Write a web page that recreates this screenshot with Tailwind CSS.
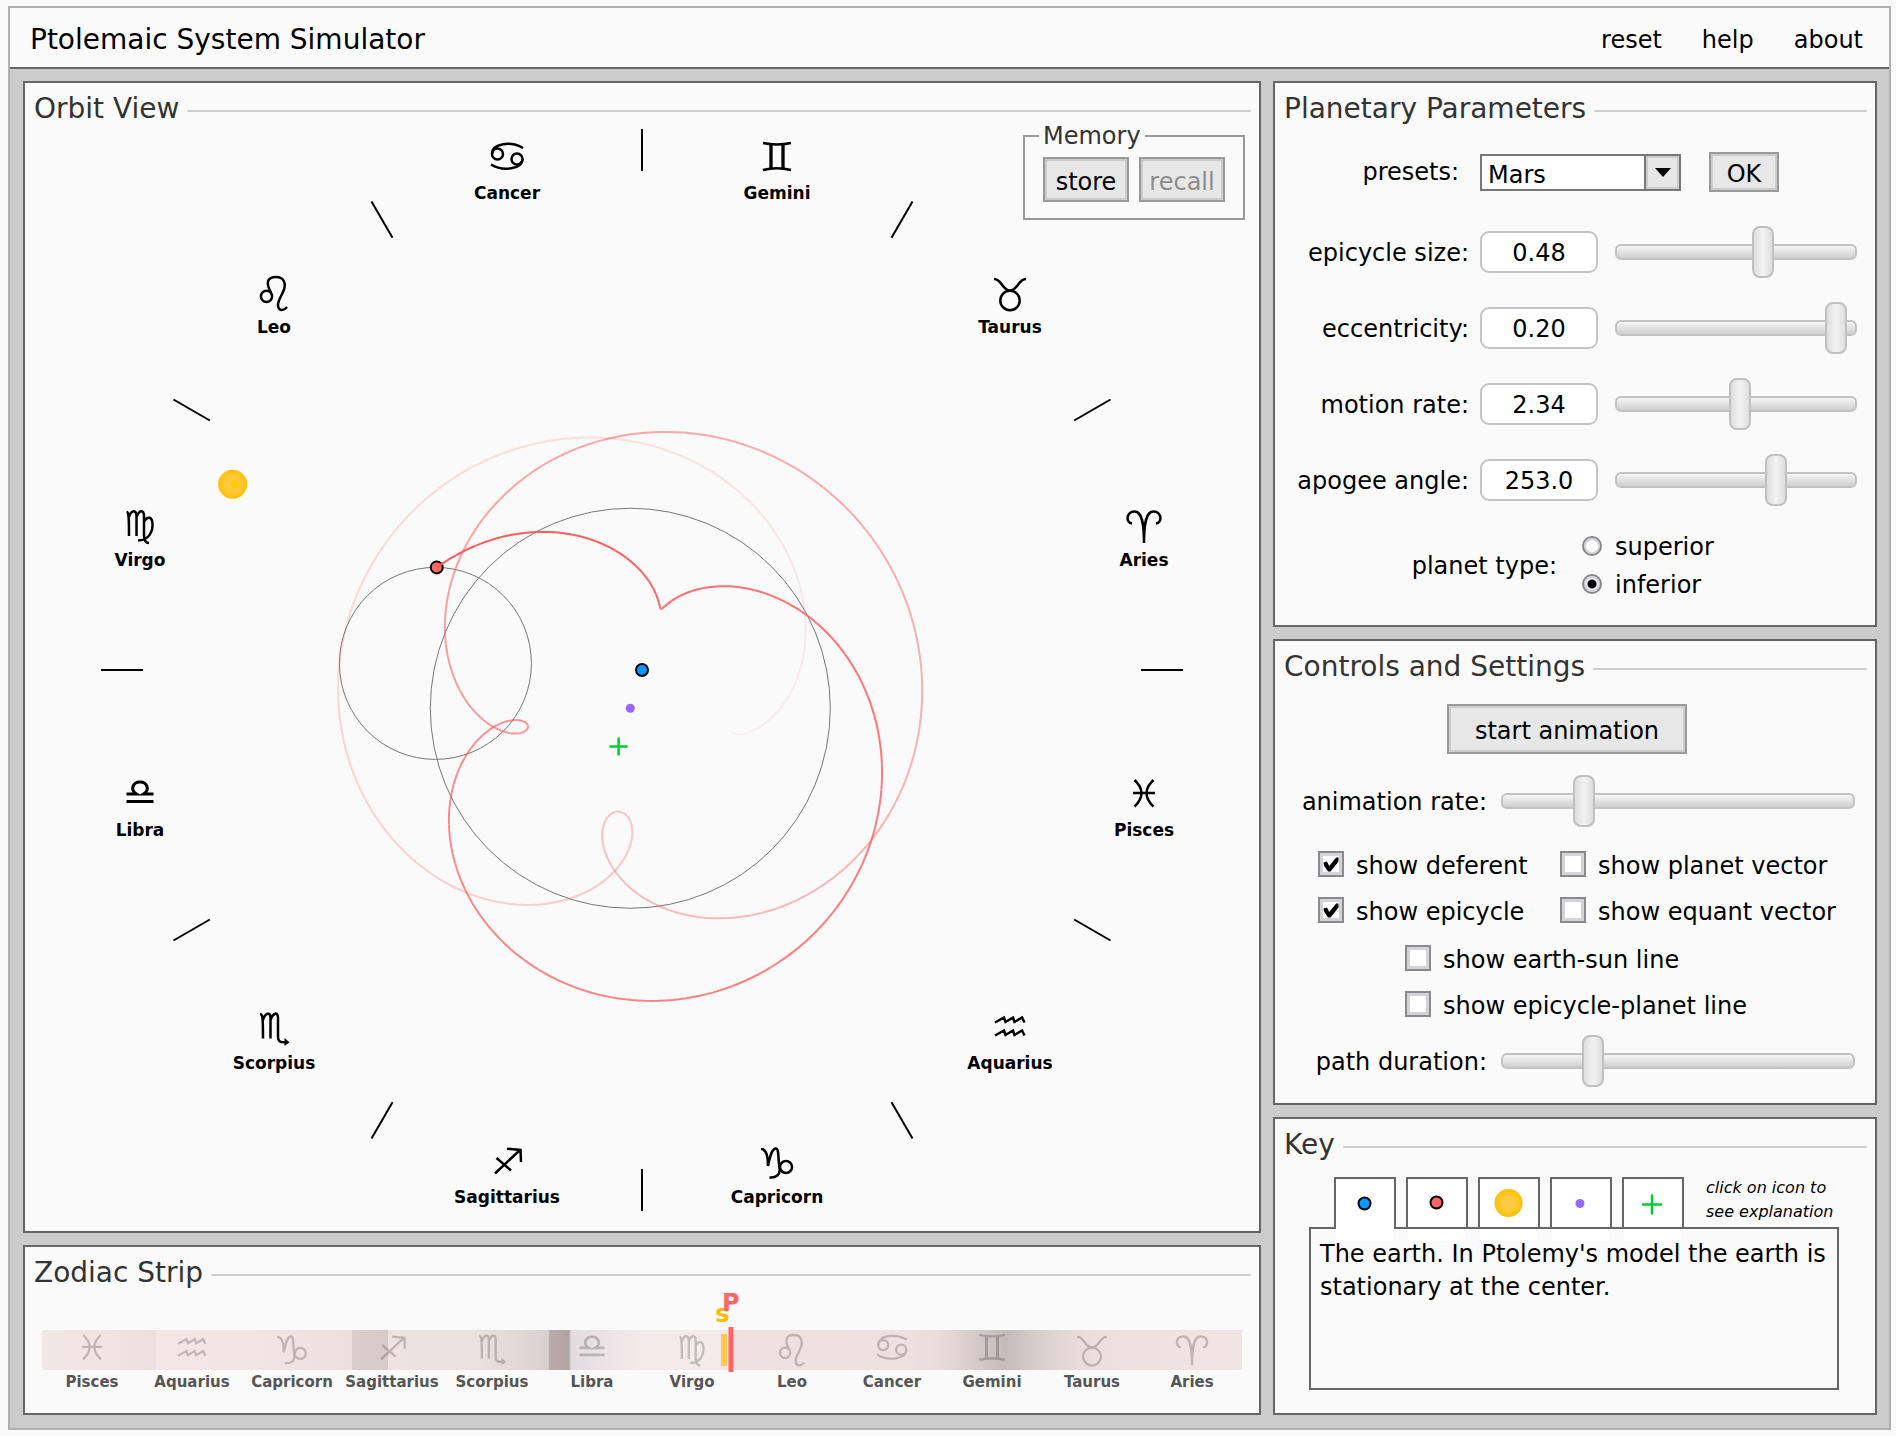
<!DOCTYPE html>
<html lang="en">
<head>
<meta charset="utf-8">
<title>Ptolemaic System Simulator</title>
<script src="https://cdn.jsdelivr.net/npm/@tailwindcss/browser@4"></script>
</head>
<body class="min-h-screen bg-[#fafafa] pt-[6px] pr-[5px] pb-[6px] pl-2 font-['DejaVu_Sans',sans-serif] text-2xl leading-8 text-black">
<div class="border-2 border-[#b0b0b0] bg-[#ccc]">

  <header class="flex h-[61px] items-center justify-between border-b-2 border-[#666] bg-[#fafafa] pt-[5px] pr-[26px] pl-5">
    <h1 class="text-[28px] leading-8">Ptolemaic System Simulator</h1>
    <nav class="flex gap-10">
      <a href="#reset">reset</a>
      <a href="#help">help</a>
      <a href="#about">about</a>
    </nav>
  </header>

  <main class="grid grid-cols-[minmax(0,1fr)_604px] gap-3 pt-3 pr-3 pb-[13px] pl-[13px]">
    <div class="flex flex-col gap-3">

      <section class="relative border-2 border-[#666] bg-[#fafafa] pt-[10px]">
        <div class="flex items-center gap-2 pr-2 pl-[9px]">
          <h2 class="text-[28px] leading-8 text-[#333]">Orbit View</h2>
          <div class="mt-1 h-0.5 flex-1 rounded bg-[#ccc]"></div>
        </div>
        <svg id="orbit" viewBox="25 125 1234 1106" class="block h-auto w-full" role="img" aria-label="Orbit diagram">
          <defs>
            <radialGradient id="sunFill"><stop offset="0" stop-color="#ffcc4d"/><stop offset=".6" stop-color="#ffc933"/><stop offset="1" stop-color="#ffbf00"/></radialGradient>
          </defs>
          <g id="ticks" stroke="#000" stroke-width="2"></g>
          <g id="signs" text-anchor="middle"></g>
          <g id="circles" fill="none" stroke="#777" stroke-width="1"></g>
          <g id="bodies"></g>
          <g id="trail" fill="none" stroke="#ff5a5a" stroke-width="2"></g>
        </svg>
        <fieldset class="absolute top-[41px] right-[14px] flex gap-[10px] border-2 border-[#999] px-[18px] pt-[9px] pb-4">
          <legend class="-ml-1 px-1 leading-6 text-[#333]">Memory</legend>
          <button type="button" class="h-[45px] w-[86px] border-2 border-[#999] bg-[#e7e7e7] pt-1 inset-ring-2 inset-ring-[#ccc]">store</button>
          <button type="button" disabled class="h-[45px] w-[86px] border-2 border-[#999] bg-[#e7e7e7] pt-1 text-[#8c8c8c] inset-ring-2 inset-ring-[#ccc]">recall</button>
        </fieldset>
      </section>

      <section class="flex-1 border-2 border-[#666] bg-[#fafafa] pt-[10px] pb-[21px]">
        <div class="flex items-center gap-2 pr-2 pl-[9px]">
          <h2 class="text-[28px] leading-8 text-[#333]">Zodiac Strip</h2>
          <div class="mt-1 h-0.5 flex-1 rounded bg-[#ccc]"></div>
        </div>
        <div class="relative mx-[17px] mt-[41px]">
          <div id="stripSigns" class="grid h-10 grid-cols-12 bg-[linear-gradient(90deg,#f1e7e7_0%,#f0e3e3_6%,#ebdfdf_9.5%,#f2e7e6_9.5%,#f1e6e5_18%,#ecdfdf_25.8%,#dccdcd_25.8%,#d8caca_28.8%,#ece3e2_28.8%,#ebe1e0_36%,#d9d1d1_42.2%,#bcabab_42.3%,#b2a3a3_43.9%,#e3dce0_44.1%,#f4eaec_50%,#f3eaeb_56.5%,#f0e0e1_57.5%,#efe0e0_72.5%,#e8dbdb_75%,#d3c9c9_78%,#c5bbbb_80.3%,#d0c7c7_82%,#e0d6d6_84.5%,#eddfdf_88%,#f1e5e4_100%)]"></div>
          <div id="stripNames" class="mt-0.5 grid grid-cols-12 text-center text-[15px] leading-5 font-bold text-[#555]"></div>
          <div class="absolute top-1 left-[56.8%] h-8 w-[6px] -translate-x-1/2 bg-[#fcc84e]"></div>
          <div class="absolute top-[-28px] left-[56.7%] -translate-x-1/2 leading-6 font-bold text-[#fb0]">s</div>
          <div class="absolute top-[-3px] left-[57.4%] h-[45px] w-[5px] -translate-x-1/2 bg-[#f66]"></div>
          <div class="absolute top-[-39px] left-[57.4%] -translate-x-1/2 leading-6 font-bold text-[#f66]">P</div>
        </div>
      </section>
    </div>

    <div class="flex flex-col gap-3">

      <section class="border-2 border-[#666] bg-[#fafafa] pt-[10px] pb-[21px]">
        <div class="flex items-center gap-2 pr-2 pl-[9px]">
          <h2 class="text-[28px] leading-8 text-[#333]">Planetary Parameters</h2>
          <div class="mt-1 h-0.5 flex-1 rounded bg-[#ccc]"></div>
        </div>
        <form>
          <div class="mt-[27px] grid grid-cols-[195px_auto_auto] items-center justify-start">
            <label for="presets" class="pr-[11px] text-right">presets:</label>
            <div class="relative ml-[10px] h-[37px] w-[201px]">
              <select id="presets" class="h-full w-full appearance-none border-2 border-[#777] bg-white pt-[3px] pl-[6px]"><option>Mars</option><option>Venus</option><option>Jupiter</option></select>
              <span class="pointer-events-none absolute top-0 right-0 flex h-full w-[37px] items-center justify-center border-2 border-[#777] bg-[#e6e6e6] inset-ring-2 inset-ring-[#ccc]">
                <svg viewBox="0 0 16 9" class="h-[9px] w-4"><path d="M0 0h16L8 9z"/></svg>
              </span>
            </div>
            <button type="button" class="ml-7 h-10 w-[70px] border-2 border-[#999] bg-[#e7e7e7] pt-1 inset-ring-2 inset-ring-[#ccc]">OK</button>
          </div>
          <div id="params" class="mt-[34px] mr-[18px] grid grid-cols-[1fr_118px_259px] items-center gap-y-6"></div>
          <div role="radiogroup" aria-labelledby="ptypeLabel" class="mt-[22px] grid grid-cols-[282px_auto] items-center justify-start gap-x-[25px]">
            <span id="ptypeLabel" class="text-right">planet type:</span>
            <div class="grid">
              <label class="flex h-[38px] items-center gap-[13px]"><input type="radio" name="ptype" class="-mt-0.5 size-5 appearance-none rounded-full border-2 border-[#888] bg-white inset-ring-2 inset-ring-[#d4d4da] checked:bg-[radial-gradient(circle,#000_0,#000_4px,#fff_5px)]">superior</label>
              <label class="flex h-[38px] items-center gap-[13px]"><input type="radio" name="ptype" checked class="-mt-0.5 size-5 appearance-none rounded-full border-2 border-[#888] bg-white inset-ring-2 inset-ring-[#d4d4da] checked:bg-[radial-gradient(circle,#000_0,#000_4px,#fff_5px)]">inferior</label>
            </div>
          </div>
        </form>
      </section>

      <section class="border-2 border-[#666] bg-[#fafafa] pt-[10px] pb-4">
        <div class="flex items-center gap-2 pr-2 pl-[9px]">
          <h2 class="text-[28px] leading-8 text-[#333]">Controls and Settings</h2>
          <div class="mt-1 h-0.5 flex-1 rounded bg-[#ccc]"></div>
        </div>
        <button type="button" class="mt-[21px] ml-[172px] block h-[50px] w-60 border-2 border-[#999] bg-[#e7e7e7] pt-1 inset-ring-2 inset-ring-[#ccc]">start animation</button>
        <div id="rateRow" class="mt-[21px] grid grid-cols-[1fr_354px] items-center gap-[14px] pr-5"></div>
        <div id="checksTop" class="mt-6 ml-[43px] grid grid-cols-[242px_auto] justify-start gap-y-5"></div>
        <div id="checksBottom" class="mt-[22px] ml-[130px] grid justify-start gap-y-5"></div>
        <div id="pathRow" class="mt-[18px] grid grid-cols-[1fr_354px] items-center gap-[14px] pr-5"></div>
      </section>

      <section class="flex-1 border-2 border-[#666] bg-[#fafafa] pt-[10px] pb-[23px]">
        <div class="flex items-center gap-2 pr-2 pl-[9px]">
          <h2 class="text-[28px] leading-8 text-[#333]">Key</h2>
          <div class="mt-1 h-0.5 flex-1 rounded bg-[#ccc]"></div>
        </div>
        <div class="mt-4 mr-9 ml-[34px]">
          <div class="-mb-0.5 flex gap-[10px] pl-[25px]" role="tablist">
            <button type="button" role="tab" aria-selected="true" aria-label="earth" class="relative z-10 h-[52px] w-[62px] border-2 border-b-0 border-[#666] bg-white after:absolute after:inset-x-0 after:top-full after:h-3 after:bg-white">
              <svg viewBox="0 0 58 50" class="h-[50px] w-[58px]"><circle cx="28.500" cy="24.500" r="6" fill="#09f" stroke="#000" stroke-width="2"/></svg>
            </button>
            <button type="button" role="tab" aria-label="planet" class="relative h-[52px] w-[62px] border-2 border-[#666] bg-white after:absolute after:inset-x-0 after:top-[50px] after:h-3 after:bg-white">
              <svg viewBox="0 0 58 48" class="h-12 w-[58px]"><circle cx="28.500" cy="23.500" r="6" fill="#f66" stroke="#000" stroke-width="2"/></svg>
            </button>
            <button type="button" role="tab" aria-label="sun" class="relative h-[52px] w-[62px] border-2 border-[#666] bg-white after:absolute after:inset-x-0 after:top-[50px] after:h-3 after:bg-white">
              <svg viewBox="0 0 58 48" class="h-12 w-[58px]"><circle cx="28.500" cy="24" r="14" fill="url(#sunFill)"/></svg>
            </button>
            <button type="button" role="tab" aria-label="deferent center" class="relative h-[52px] w-[62px] border-2 border-[#666] bg-white after:absolute after:inset-x-0 after:top-[50px] after:h-3 after:bg-white">
              <svg viewBox="0 0 58 48" class="h-12 w-[58px]"><circle cx="28" cy="24.500" r="4.500" fill="#96f"/></svg>
            </button>
            <button type="button" role="tab" aria-label="equant" class="relative h-[52px] w-[62px] border-2 border-[#666] bg-white after:absolute after:inset-x-0 after:top-[50px] after:h-3 after:bg-white">
              <svg viewBox="0 0 58 48" class="h-12 w-[58px]"><path d="M19 25.500h18M28 16.500v18" stroke="#0c3" stroke-width="2.500" stroke-linecap="round"/></svg>
            </button>
            <p class="-mt-px ml-3 text-base leading-6 whitespace-nowrap italic">click on icon to<br>see explanation</p>
          </div>
          <div class="h-[163px] border-2 border-[#666] pt-[9px] pl-[9px] leading-[33px]" role="tabpanel">
            <p class="relative z-20">The earth. In Ptolemy's model the earth is stationary at the center.</p>
          </div>
        </div>
      </section>
    </div>
  </main>
</div>

<script>
const byId = id => document.getElementById(id);
// counter-clockwise from the right-hand tick, one sign every 30 degrees: name and symbol strokes
const signs = [
  ['Aries', '<path d="M-12-11.500C-18.500-12-18-23.500-9.500-23.500C-2-23.500 0-12 0 8M12-11.500C18.500-12 18-23.500 9.500-23.500C2-23.500 0-12 0 8"/>'],
  ['Taurus', '<circle cx="0" cy="-1.500" r="9.700"/><path d="M-16-23C-8-23-8-11.500 0-11.500C8-11.500 8-23 16-23"/>'],
  ['Gemini', '<path d="M-14-25Q0-22 14-25M-14 2Q0-1.500 14 2"/><path stroke-width="3.300" d="M-6-23.500V0.500M6-23.500V0.500"/>'],
  ['Cancer', '<circle cx="-9.500" cy="-14" r="5.500"/><circle cx="10" cy="-9" r="5.500"/><path d="M-15-14C-15-25 4-27 16-20M15.500-9C15.500 1 -4 4-16-3.500"/>'],
  ['Leo', '<circle cx="-7.500" cy="-5.700" r="5.600"/><path d="M-3-9.500C-9-20-6-25 2-25C10-25 12-18.500 10-12.500C8-6.500 4-2 4 3C4 9 9.500 9.500 13 5"/>'],
  ['Virgo', '<path d="M-13.500-23C-11-23-11-19-11 1M-11-18C-9-25-3.500-26-3.500-19V1M-3.500-18C-1-25 4-26 4-19V0C4 5 6 8 9 8M4-13C7-19.500 13-19 12.500-9C12-1 7 5.500-2 5.500"/>'],
  ['Libra', '<path stroke-width="3" d="M-13.500-3.500H13.500M-13.500-11H-3.500C-10-15-7.500-23 0-23C7.500-23 10-15 3.500-11H13.500"/>'],
  ['Scorpius', '<path d="M-14-24C-11.500-24-11-22-11 .5M-11-18C-9-25-3.500-27-3.500-20V.5M-3.500-18C-1-25 4-27 4-20V-1C4 3 6 4.500 11 4.300"/><path fill="#000" stroke="none" d="M10.500 0L15.500 4.300L10.500 8z"/>'],
  ['Sagittarius', '<path d="M-12 1.500L13-22M0-23.300L13.500-22L14-10M-10.500-14L4-1.500"/>'],
  ['Capricorn', '<circle cx="9" cy="-5" r="6"/><path d="M-16-23C-11-23-9-18-9-6C-7-16-5-23.500-1-23.500C2-23.500 1-13 2.500-4C3.500 3-1 6-7.500 5.500"/>'],
  ['Aquarius', '<path d="M-15-15.500L-6-20.500L-4.500-16L3-20.500L4.500-16L12-20.500L14.500-15.500M-15-2.500L-6-7.500L-4.500-3L3-7.500L4.500-3L12-7.500L14.500-2.500"/>'],
  ['Pisces', '<path d="M-9.500-25Q4.500-12-9.500 1.500M9.500-25Q-4.500-12 9.500 1.500M-11-12H11"/>'],
];
const rad = d => d * Math.PI / 180;
const polar = (c, r, deg) => [c[0] + r * Math.cos(rad(deg)), c[1] - r * Math.sin(rad(deg))];
const R = 200, epicycle = 0.48, ecc = 0.20, apogee = 253;
const earth = [642, 670];
const deferent = polar(earth, ecc * R, apogee);
const equant = polar(earth, 2 * ecc * R, apogee);

let ticks = '', names = '';
for (let i = 0; i < 12; i++) {
  const a = polar(earth, 499, i * 30), b = polar(earth, 541, i * 30);
  ticks += `<line x1="${a[0]}" y1="${a[1]}" x2="${b[0]}" y2="${b[1]}"/>`;
  const p = polar(earth, 520, i * 30 + 15).map(Math.round);
  names += `<g transform="translate(${p[0]} ${p[1]})" fill="none" stroke="#000" stroke-width="2.500">${signs[i][1]}</g><text x="${p[0]}" y="${p[1] + 31}" class="text-[17px] font-bold">${signs[i][0]}</text>`;
}
byId('ticks').innerHTML = ticks;
byId('signs').innerHTML = names;

// the epicycle's center keeps a uniform angle as seen from the equant
function epicycleCenter(angle) {
  const u = [Math.cos(rad(angle)), -Math.sin(rad(angle))];
  const d = [equant[0] - deferent[0], equant[1] - deferent[1]];
  const dot = u[0] * d[0] + u[1] * d[1];
  const t = -dot + Math.sqrt(dot * dot - (ecc * R) ** 2 + R * R);
  return [equant[0] + t * u[0], equant[1] + t * u[1]];
}
const sunAngle = 155.6, rate = 2.373;
const planetAt = back => polar(epicycleCenter(sunAngle - back), epicycle * R, 89.2 - rate * back);
const c = epicycleCenter(sunAngle), planet = planetAt(0), sun = polar(earth, 449.5, sunAngle);
byId('circles').innerHTML = `<circle cx="${deferent[0]}" cy="${deferent[1]}" r="${R}"/><circle cx="${c[0]}" cy="${c[1]}" r="${epicycle * R}"/>`;
byId('bodies').innerHTML =
  `<circle cx="${sun[0]}" cy="${sun[1]}" r="14.500" fill="url(#sunFill)"/><circle cx="${sun[0] + 2}" cy="${sun[1]}" r="4" fill="#fc0"/>` +
  `<circle cx="${earth[0]}" cy="${earth[1]}" r="6" fill="#09f" stroke="#000" stroke-width="2"/>` +
  `<circle cx="${deferent[0]}" cy="${deferent[1]}" r="4.500" fill="#96f"/>` +
  `<path d="M${equant[0] - 9} ${equant[1]}h18M${equant[0]} ${equant[1] - 9}v18" stroke="#0c3" stroke-width="2.500"/>` +
  `<circle cx="${planet[0]}" cy="${planet[1]}" r="6" fill="#f66" stroke="#000" stroke-width="2"/>`;
const span = 880, step = 4;
let trail = '';
for (let b = span; b > 0; b -= step) {
  const pts = [0, 1, 2, 3, 4].map(k => planetAt(b - k).map(v => v.toFixed(2)).join(' '));
  trail += `<path d="M${pts.join('L')}" stroke-opacity="${(0.05 + 0.95 * (1 - b / span)).toFixed(3)}"/>`;
}
byId('trail').innerHTML = trail;

const strip = [...signs].reverse();
byId('stripSigns').innerHTML = strip.map(s => `<svg viewBox="-40 -28 80 40" class="mx-auto h-10 w-20 opacity-20"><g transform="scale(.92)" fill="none" stroke="#000" stroke-width="2.500">${s[1]}</g></svg>`).join('');
byId('stripNames').innerHTML = strip.map(s => `<span>${s[0]}</span>`).join('');

const slider = (id, value, name) => `<input type="range" id="${id}" min="0" max="1000" value="${value}" ${name ? `aria-label="${name}"` : ''} class="block h-[52px] w-full appearance-none bg-transparent [&::-webkit-slider-runnable-track]:h-4 [&::-webkit-slider-runnable-track]:rounded-[6px] [&::-webkit-slider-runnable-track]:border-2 [&::-webkit-slider-runnable-track]:border-[#c2c2c2] [&::-webkit-slider-runnable-track]:bg-linear-to-b [&::-webkit-slider-runnable-track]:from-[#f6f6f6] [&::-webkit-slider-runnable-track]:to-[#cfcfcf] [&::-webkit-slider-thumb]:mt-[-20px] [&::-webkit-slider-thumb]:h-[52px] [&::-webkit-slider-thumb]:w-[22px] [&::-webkit-slider-thumb]:appearance-none [&::-webkit-slider-thumb]:rounded-[8px] [&::-webkit-slider-thumb]:border-2 [&::-webkit-slider-thumb]:border-[#c0c0c0] [&::-webkit-slider-thumb]:bg-linear-to-r [&::-webkit-slider-thumb]:from-[#dedede] [&::-webkit-slider-thumb]:via-[#f2f2f2] [&::-webkit-slider-thumb]:to-[#dedede]">`;
byId('params').innerHTML = [['epicycle size', '0.48', 626], ['eccentricity', '0.20', 962], ['motion rate', '2.34', 517], ['apogee angle', '253.0', 686]].map(([n, v, p], i) =>
  `<label for="p${i}" class="pt-0.5 pr-[11px] text-right">${n}:</label><input id="p${i}" value="${v}" class="h-[42px] w-full rounded-[9px] border-2 border-[#c4c4c4] bg-white pt-px text-center"><div class="pl-[17px]">${slider('s' + i, p, n)}</div>`).join('');
byId('rateRow').innerHTML = `<label for="rate" class="pt-0.5 text-right">animation rate:</label>${slider('rate', 214)}`;
byId('pathRow').innerHTML = `<label for="path" class="pt-0.5 text-right">path duration:</label>${slider('path', 242)}`;

const check = ([n, on]) => `<label class="flex h-[26px] items-center gap-3"><span class="relative size-[26px]"><input type="checkbox" ${on ? 'checked' : ''} class="peer block size-[26px] appearance-none border-2 border-[#8a8a8a] bg-white inset-ring-3 inset-ring-[#d3d3da]"><svg viewBox="0 0 26 26" class="pointer-events-none absolute inset-0 hidden size-[26px] peer-checked:block"><path d="M5.500 11.500l3.500-1 2.200 4.500 7-8.500 2.300 0v4l-8 10h-2.500l-4-6z"/></svg></span><span class="pt-[3px]">${n}</span></label>`;
byId('checksTop').innerHTML = [['show deferent', 1], ['show planet vector', 0], ['show epicycle', 1], ['show equant vector', 0]].map(check).join('');
byId('checksBottom').innerHTML = [['show earth-sun line', 0], ['show epicycle-planet line', 0]].map(check).join('');
</script>
</body>
</html>
